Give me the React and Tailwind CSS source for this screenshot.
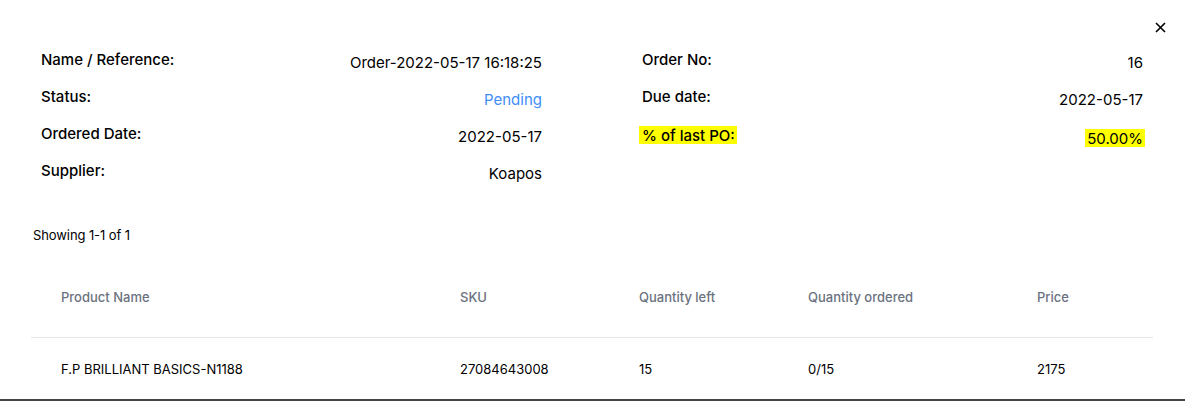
const details = [
  [
    { label: 'Name / Reference:', value: 'Order-2022-05-17 16:18:25' },
    { label: 'Status:', value: 'Pending', tone: 'blue' },
    { label: 'Ordered Date:', value: '2022-05-17' },
    { label: 'Supplier:', value: 'Koapos' },
  ],
  [
    { label: 'Order No:', value: '16' },
    { label: 'Due date:', value: '2022-05-17' },
    { label: '% of last PO:', value: '50.00%', mark: true },
  ],
];

const columns = ['Product Name', 'SKU', 'Quantity left', 'Quantity ordered', 'Price'];
const rows = [['F.P BRILLIANT BASICS-N1188', '27084643008', '15', '0/15', '2175']];

function DetailRow({ label, value, tone, mark }) {
  return (
    <div className="flex justify-between h-[37px]">
      <span className={`text-[15px] font-medium leading-[20px] text-black ${mark ? 'bg-[#ffff00] -ml-[3px] pl-[3px] pr-[2px] h-[18px] mt-[2px] leading-[16px]' : ''}`}>
        {label}
      </span>
      <span
        className={`text-[15px] leading-[20px] mt-[3px] ${tone === 'blue' ? 'text-[#3d8ef8]' : 'text-black'} ${mark ? 'bg-[#ffff00] pl-[2px] -mr-[2px] pr-[2px] h-[18px] mt-[5px] leading-[16px]' : ''}`}
      >
        {value}
      </span>
    </div>
  );
}

export default function App() {
  return (
    <div className="relative w-[1185px] h-[401px] bg-white border-b-2 border-[#444] font-['Inter',sans-serif] overflow-hidden">
      <button className="absolute right-[19px] top-[22px] text-black">
        <svg width="11" height="11" viewBox="0 0 11 11" fill="none" stroke="currentColor" strokeWidth="1.6">
          <path d="M1 1L10 10M10 1L1 10" />
        </svg>
      </button>

      <div className="grid grid-cols-2 gap-x-[100px] pl-[41px] pr-[42px] pt-[50px]">
        {details.map((col, i) => (
          <div key={i} className="flex flex-col">
            {col.map((d) => (
              <DetailRow key={d.label} {...d} />
            ))}
          </div>
        ))}
      </div>

      <div className="px-[31px] pt-[28px]">
        <p className="pl-[2px] text-[13px] tracking-[-0.1px] text-black">Showing 1-1 of 1</p>

        <table className="w-[1122px] mt-[13px] table-fixed border-collapse text-[13px]">
          <colgroup>
            <col className="w-[399px]" />
            <col className="w-[179px]" />
            <col className="w-[169px]" />
            <col className="w-[229px]" />
            <col />
          </colgroup>
          <thead>
            <tr className="border-b border-[#e5e5e5]">
              {columns.map((c) => (
                <th key={c} className="h-[79px] pl-[30px] text-left font-medium text-[#6b7280]">
                  {c}
                </th>
              ))}
            </tr>
          </thead>
          <tbody>
            {rows.map((r) => (
              <tr key={r[0]}>
                {r.map((v, i) => (
                  <td key={i} className="h-[64px] pl-[30px] text-black">
                    {v}
                  </td>
                ))}
              </tr>
            ))}
          </tbody>
        </table>
      </div>
    </div>
  );
}
